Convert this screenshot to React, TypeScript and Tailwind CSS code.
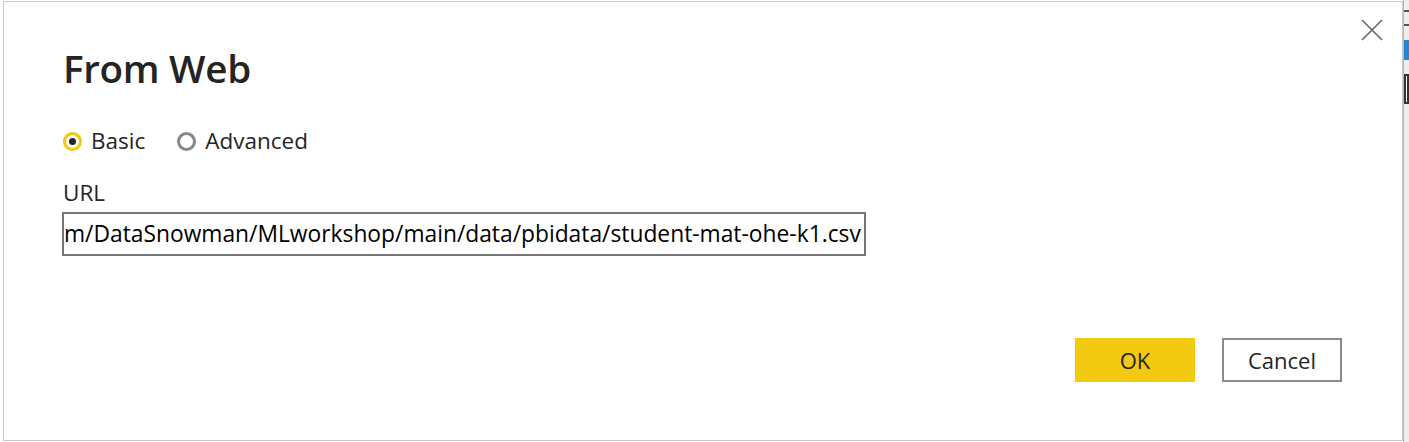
import React from "react";

export default function App() {
  const font = { fontFamily: '"Open Sans", "Noto Sans", sans-serif' };
  return (
    <div className="w-[1409px] h-[442px] bg-white flex overflow-hidden" style={font}>
      <div className="w-[3px] h-full bg-white" />
      <div className="mt-[1px] w-[1400px] h-[440px] border border-[#c8c8c8] bg-white flex flex-col pl-[59px] pr-[60px] text-[#252423]">
        <div className="flex justify-between items-start">
          <h1 className="mt-[38px] text-[38.6px] leading-[56px] font-semibold text-[#252423] tracking-[-0.3px]">From Web</h1>
          <button className="mt-[16px] -mr-[42px] w-[24px] h-[24px] flex items-center justify-center">
            <svg width="22" height="22" viewBox="0 0 22 22">
              <path d="M1 1 L21 21 M21 1 L1 21" stroke="#666" strokeWidth="1.6" fill="none" />
            </svg>
          </button>
        </div>
        <div className="mt-[30px] flex items-center h-[30px] text-[22.5px] leading-[30px]">
          <span className="w-[19px] h-[19px] rounded-full border-[3px] border-[#f2c811] flex items-center justify-center">
            <span className="w-[7px] h-[7px] rounded-full bg-[#252423]" />
          </span>
          <span className="ml-[9px] text-[#252423]">Basic</span>
          <span className="ml-[32px] w-[19px] h-[19px] rounded-full border-[3px] border-[#8a8886]" />
          <span className="ml-[9px] text-[#252423]">Advanced</span>
        </div>
        <div className="mt-[22px] text-[22.5px] leading-[30px] text-[#252423]">URL</div>
        <div className="mt-[4px] -ml-[1px] w-[804px] h-[44px] border-2 border-[#767676] flex items-center overflow-hidden whitespace-nowrap text-[22.8px] text-black">
          m/DataSnowman/MLworkshop/main/data/pbidata/student-mat-ohe-k1.csv
        </div>
        <div className="mt-[82px] flex justify-end gap-[27px]">
          <button className="w-[120px] h-[44px] bg-[#f2c811] text-[22px] text-[#252423]">OK</button>
          <button className="w-[120px] h-[44px] border-2 border-[#8a8a8a] bg-white text-[22px] text-[#252423]">Cancel</button>
        </div>
      </div>
      <div className="flex-1 h-full bg-[#ededed] border-l border-[#b8b8b8] flex flex-col">
        <div className="h-[10px]" />
        <div className="h-[2px] bg-[#555]" />
        <div className="h-[12px]" />
        <div className="h-[2px] bg-[#555]" />
        <div className="mt-[14px] h-[20px] bg-[#1f8ad2]" />
        <div className="mt-[14px] h-[30px] border-2 border-[#333] bg-white" />
      </div>
    </div>
  );
}
